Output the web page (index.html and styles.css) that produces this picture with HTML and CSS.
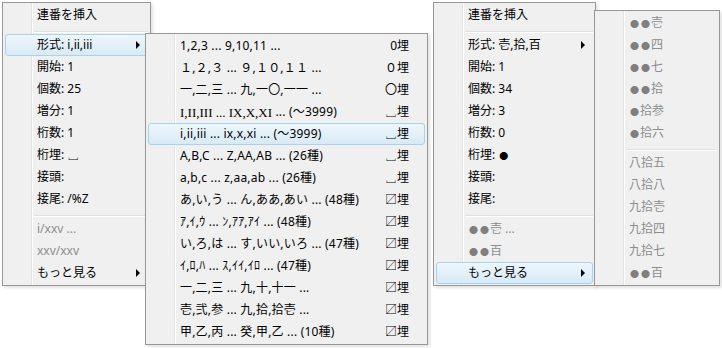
FILE: index.html
```html
<!DOCTYPE html>
<html lang="ja">
<head>
    <meta charset="UTF-8">
    <meta name="viewport" content="width=device-width, initial-scale=1.0">
    <title>連番を挿入</title>
    <link rel="stylesheet" href="styles.css">
</head>
<body>
    <div class="screen">
        <!-- 左: 形式サブメニューを開いた状態 -->
        <div class="menu menu-a">
            <div class="item">連番を挿入</div>
            <div class="sep"></div>
            <div class="item hot">形式: i,ii,iii<span class="arrow"></span></div>
            <div class="item">開始: 1</div>
            <div class="item">個数: 25</div>
            <div class="item">増分: 1</div>
            <div class="item">桁数: 1</div>
            <div class="item">桁埋: ␣</div>
            <div class="item">接頭:</div>
            <div class="item">接尾: /%Z</div>
            <div class="sep"></div>
            <div class="item off">i/xxv ...</div>
            <div class="item off">xxv/xxv</div>
            <div class="item">もっと見る<span class="arrow"></span></div>

            <div class="menu submenu sub-a">
                <div class="item">1,2,3 ... 9,10,11 ...<span class="key">0埋</span></div>
                <div class="item">１,２,３ ... ９,１０,１１ ...<span class="key">０埋</span></div>
                <div class="item">一,二,三 ... 九,一〇,一一 ...<span class="key">〇埋</span></div>
                <div class="item"><span class="roman">I,II,III ... IX,X,XI</span>&nbsp;... (～3999)<span class="key">␣埋</span></div>
                <div class="item hot">i,ii,iii ... ix,x,xi ... (～3999)<span class="key">␣埋</span></div>
                <div class="item">A,B,C ... Z,AA,AB ... (26種)<span class="key">␣埋</span></div>
                <div class="item">a,b,c ... z,aa,ab ... (26種)<span class="key">␣埋</span></div>
                <div class="item">あ,い,う ... ん,ああ,あい ... (48種)<span class="key">〼埋</span></div>
                <div class="item">ｱ,ｲ,ｳ ... ﾝ,ｱｱ,ｱｲ ... (48種)<span class="key">〼埋</span></div>
                <div class="item">い,ろ,は ... す,いい,いろ ... (47種)<span class="key">〼埋</span></div>
                <div class="item">ｲ,ﾛ,ﾊ ... ｽ,ｲｲ,ｲﾛ ... (47種)<span class="key">〼埋</span></div>
                <div class="item">一,二,三 ... 九,十,十一 ...<span class="key">〼埋</span></div>
                <div class="item">壱,弐,参 ... 九,拾,拾壱 ...<span class="key">〼埋</span></div>
                <div class="item">甲,乙,丙 ... 癸,甲,乙 ... (10種)<span class="key">〼埋</span></div>
            </div>
        </div>

        <!-- 右: もっと見るを開いた状態 -->
        <div class="menu menu-b">
            <div class="item">連番を挿入</div>
            <div class="sep"></div>
            <div class="item">形式: 壱,拾,百<span class="arrow"></span></div>
            <div class="item">開始: 1</div>
            <div class="item">個数: 34</div>
            <div class="item">増分: 3</div>
            <div class="item">桁数: 0</div>
            <div class="item">桁埋:&nbsp;<span class="dot">●</span></div>
            <div class="item">接頭:</div>
            <div class="item">接尾:</div>
            <div class="sep"></div>
            <div class="item off"><span class="dot">●</span><span class="dot">●</span>壱 ...</div>
            <div class="item off"><span class="dot">●</span><span class="dot">●</span>百</div>
            <div class="item hot">もっと見る<span class="arrow"></span></div>

            <div class="menu submenu sub-b">
                <div class="item off"><span class="dot">●</span><span class="dot">●</span>壱</div>
                <div class="item off"><span class="dot">●</span><span class="dot">●</span>四</div>
                <div class="item off"><span class="dot">●</span><span class="dot">●</span>七</div>
                <div class="item off"><span class="dot">●</span><span class="dot">●</span>拾</div>
                <div class="item off"><span class="dot">●</span>拾参</div>
                <div class="item off"><span class="dot">●</span>拾六</div>
                <div class="sep"></div>
                <div class="item off">八拾五</div>
                <div class="item off">八拾八</div>
                <div class="item off">九拾壱</div>
                <div class="item off">九拾四</div>
                <div class="item off">九拾七</div>
                <div class="item off"><span class="dot">●</span><span class="dot">●</span>百</div>
            </div>
        </div>
    </div>
</body>
</html>
```

FILE: styles.css
```css
body {
    margin: 0;
    background: #fff;
    font-family: "Noto Sans", "Noto Sans CJK JP", "DejaVu Sans", sans-serif;
    font-size: 12px;
    color: #000;
}
.screen {
    display: flex;
    align-items: flex-start;
    box-sizing: border-box;
    min-height: 348px;
    padding: 2px;
}
.menu {
    position: relative;
    box-sizing: border-box;
    padding: 1px 2px;
    border: 1px solid #979797;
    background-color: #f0f0f0;
    background-image: linear-gradient(to right,
        transparent 28px, #e2e3e3 28px, #e2e3e3 29px,
        #fff 29px, #fff 30px, transparent 30px);
    box-shadow: 2px 2px 3px rgba(0, 0, 0, 0.12);
}
.menu-a {
    width: 149px;
}
.menu-b {
    width: 163px;
    margin-left: 282px;
}
.submenu {
    position: absolute;
    z-index: 2;
}
.sub-a {
    left: 142px;
    top: 30px;
    width: 283px;
    letter-spacing: 0.2px;
}
.sub-b {
    left: 160px;
    top: 7px;
    width: 126px;
}
.item {
    display: flex;
    align-items: center;
    height: 22px;
    box-sizing: border-box;
    padding: 0 15px 0 31px;
    border: 1px solid transparent;
    border-radius: 3px;
    line-height: 1;
    white-space: nowrap;
}
.item.hot {
    border-color: #a8d3ec;
    background: linear-gradient(#edf6fc, #d8eaf6);
}
.item.off {
    color: #8d8d8d;
}
.roman {
    font-family: "Liberation Serif", serif;
    font-size: 13px;
    letter-spacing: 0;
}
.dot {
    display: inline-block;
    width: 11px;
    font-size: 9px;
    text-align: center;
}
.off .dot {
    color: #7f7f7f;
}
.key {
    margin-left: auto;
    letter-spacing: 0;
}
.arrow {
    margin-left: auto;
    margin-right: -8px;
    width: 0;
    height: 0;
    border-left: 4px solid #000;
    border-top: 4px solid transparent;
    border-bottom: 4px solid transparent;
}
.sep {
    position: relative;
    height: 8px;
    margin-left: 29px;
}
.sep::before {
    content: "";
    position: absolute;
    left: 0;
    right: 0;
    top: 5px;
    height: 1px;
    background: #e0e0e0;
    border-bottom: 1px solid #fff;
}
```
